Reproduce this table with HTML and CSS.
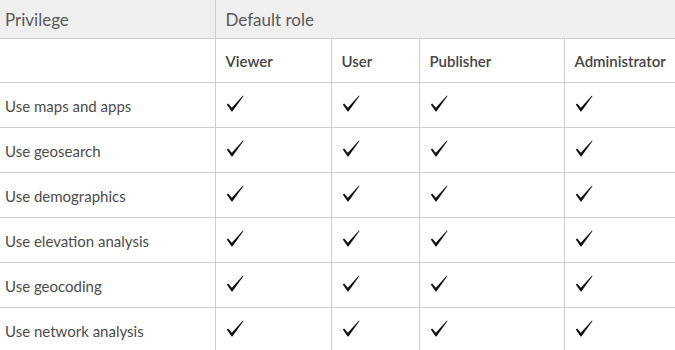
FILE: index.html
```html
<!DOCTYPE html>
<html>
<head>
<meta charset="utf-8">
<link rel="stylesheet" href="styles.css">
</head>
<body>
<table class="roles">
  <colgroup>
    <col class="c1"><col class="c2"><col class="c3"><col class="c4"><col class="c5">
  </colgroup>
  <thead>
    <tr class="top">
      <th class="first">Privilege</th>
      <th colspan="4">Default role</th>
    </tr>
    <tr class="sub">
      <th class="first"></th>
      <th>Viewer</th>
      <th>User</th>
      <th>Publisher</th>
      <th>Administrator</th>
    </tr>
  </thead>
  <tbody id="rows"></tbody>
</table>
<svg width="0" height="0" class="defs">
  <defs>
    <symbol id="chk" viewBox="0 0 18 17">
      <path d="M0.8 9.4 L2.2 8.4 L5.8 12.8 L17.0 0.6 L17.5 1.0 L6.4 16.6 L5.6 16.6 Z"/>
    </symbol>
  </defs>
</svg>
<script>
  const names = ["Use maps and apps","Use geosearch","Use demographics","Use elevation analysis","Use geocoding","Use network analysis"];
  const tb = document.getElementById("rows");
  const chk = '<svg class="chk" width="18" height="17"><use href="#chk"/></svg>';
  names.forEach(n => {
    const tr = document.createElement("tr");
    tr.innerHTML = '<td class="first">' + n + '</td>' + ('<td>' + chk + '</td>').repeat(4);
    tb.appendChild(tr);
  });
</script>
</body>
</html>
```
FILE: styles.css
```css
html, body {
  margin: 0;
  padding: 0;
  background: #fff;
  overflow: hidden;
}
.defs { position: absolute; }
.roles {
  border-collapse: collapse;
  table-layout: fixed;
  width: 700px;
  font-family: Lato, "Open Sans", sans-serif;
  color: #4c4c4c;
}
.c1 { width: 215px; }
.c2 { width: 116px; }
.c3 { width: 88px; }
.c4 { width: 145px; }
.c5 { width: 136px; }
.roles th, .roles td {
  border: 1px solid #cfcfcf;
  text-align: left;
  padding: 0 0 0 10px;
  vertical-align: middle;
  white-space: nowrap;
}
.roles .first { padding-left: 5px; border-left: none; }
.roles tr.top th {
  background: #efefef;
  height: 38px;
  font-weight: 400;
  font-size: 17px;
  border-top: none;
  color: #595959;
}
.roles tr.sub th {
  height: 43px;
  font-weight: 600;
  font-size: 15px;
  color: #444;
}
.roles td {
  height: 42px;
  font-size: 15px;
  padding-top: 2px;
}
.chk {
  display: block;
  fill: #111;
  margin-top: -5px;
}
```
